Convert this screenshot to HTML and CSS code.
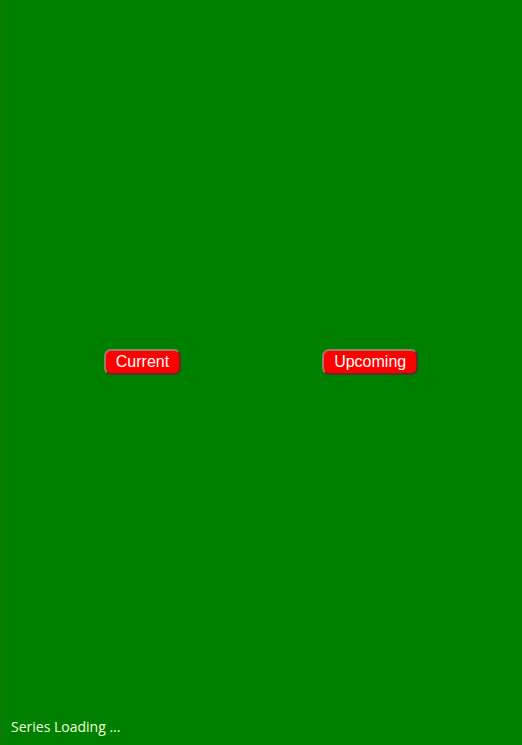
FILE: index.html
```html
<!DOCTYPE html>
<html lang="en">

<head>
    <meta charset="UTF-8">
    <meta name="viewport" content="width=device-width, initial-scale=1.0">
    <title>Series</title>
    <link rel="stylesheet" href="styles.css">
</head>

<body>
    <div class="wrap">
        <div class="tabs">
            <button class="btn">Current</button>
            <button class="btn">Upcoming</button>
        </div>
        <div class="status">Series Loading ...</div>
    </div>
</body>

</html>
```

FILE: styles.css
```css
* {
    margin: 0;
    padding: 0;
}

html,
body {
    height: 100%;
}

body {
    background-color: #008000;
}

.wrap {
    height: 100%;
    display: flex;
    flex-direction: column;
    border-left: 2px solid #0a7a0a;
    box-sizing: border-box;
}

.tabs {
    flex: 1;
    display: flex;
    justify-content: center;
    align-items: center;
    gap: 141px;
    padding-top: 6px;
    margin-left: -2px;
}

.btn {
    height: 26px;
    padding: 0 10px;
    font-family: "Liberation Sans", Arial, sans-serif;
    font-size: 16px;
    color: #fff;
    background-color: #ff0000;
    border: 2px solid #9a7a6a;
    border-right-color: #5a3028;
    border-bottom-color: #5a3028;
    border-radius: 7px;
    cursor: pointer;
}

.status {
    padding: 0 0 9px 9px;
    font-family: "Open Sans", "Noto Sans", sans-serif;
    font-size: 14px;
    line-height: 18px;
    color: #f0ffd8;
}
```
